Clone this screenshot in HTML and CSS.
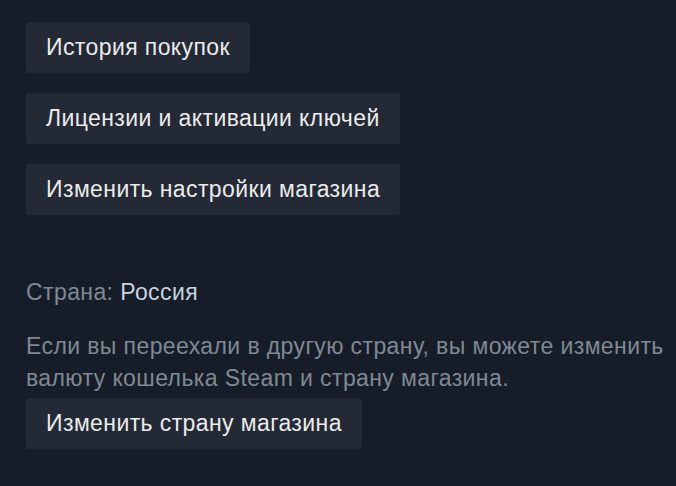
FILE: index.html
```html
<!DOCTYPE html>
<html lang="ru">
<head>
<meta charset="utf-8">
<link rel="stylesheet" href="styles.css">
</head>
<body>
<div class="page">
  <div class="btns">
    <a class="btn">История покупок</a>
    <a class="btn">Лицензии и активации ключей</a>
    <a class="btn">Изменить настройки магазина</a>
  </div>
  <div class="country">Страна: <span class="val">Россия</span></div>
  <p class="desc">Если вы переехали в другую страну, вы можете изменить валюту кошелька Steam и страну магазина.</p>
  <a class="btn">Изменить страну магазина</a>
</div>
</body>
</html>
```
FILE: styles.css
```css
html, body {
  margin: 0;
  padding: 0;
  background: #171d28;
  height: 100%;
}
.page {
  padding: 22px 0 0 26px;
  display: flex;
  flex-direction: column;
  align-items: flex-start;
  font-family: "Liberation Sans", Arial, sans-serif;
  font-size: 23px;
  letter-spacing: 0.4px;
}
.btns {
  display: flex;
  flex-direction: column;
  align-items: flex-start;
  gap: 20px;
}
.btn {
  display: flex;
  align-items: center;
  height: 51px;
  padding: 0 20px;
  background: #232a36;
  border-radius: 3px;
  color: #ebebeb;
  box-sizing: border-box;
}
.country {
  margin-top: 62px;
  line-height: 30px;
  color: #7f8994;
}
.val {
  color: #c6d4df;
}
.desc {
  margin: 23px 0 0 0;
  line-height: 32px;
  color: #7f8994;
  width: 650px;
}
.desc + .btn {
  margin-top: 4px;
}
```
